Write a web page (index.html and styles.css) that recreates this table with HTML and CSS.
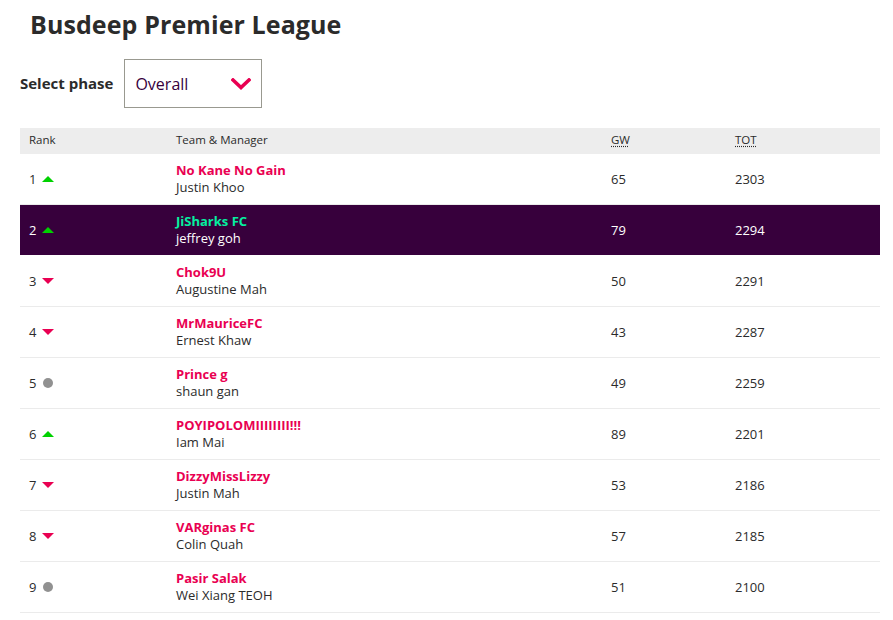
FILE: index.html
```html
<!DOCTYPE html>
<html>
<head>
<meta charset="utf-8">
<link rel="stylesheet" href="styles.css">
</head>
<body>
<h1 class="title">Busdeep Premier League</h1>
<div class="phase">
  <span class="phase-label">Select phase</span>
  <div class="select">
    <span>Overall</span>
    <svg class="chev" width="20" height="12" viewBox="0 0 20 12"><path d="M2 2 L10 9.5 L18 2" fill="none" stroke="#e90052" stroke-width="3.6" stroke-linecap="square"/></svg>
  </div>
</div>
<div class="table">
  <div class="row head">
    <div>Rank</div><div>Team &amp; Manager</div><div><abbr>GW</abbr></div><div><abbr>TOT</abbr></div>
  </div>
  <div class="row"><div class="rank">1 <i class="up"></i></div><div class="team"><b>No Kane No Gain</b><span>Justin Khoo</span></div><div>65</div><div>2303</div></div>
  <div class="row me"><div class="rank">2 <i class="up"></i></div><div class="team"><b>JiSharks FC</b><span>jeffrey goh</span></div><div>79</div><div>2294</div></div>
  <div class="row"><div class="rank">3 <i class="down"></i></div><div class="team"><b>Chok9U</b><span>Augustine Mah</span></div><div>50</div><div>2291</div></div>
  <div class="row"><div class="rank">4 <i class="down"></i></div><div class="team"><b>MrMauriceFC</b><span>Ernest Khaw</span></div><div>43</div><div>2287</div></div>
  <div class="row"><div class="rank">5 <i class="same"></i></div><div class="team"><b>Prince g</b><span>shaun gan</span></div><div>49</div><div>2259</div></div>
  <div class="row"><div class="rank">6 <i class="up"></i></div><div class="team"><b>POYIPOLOMIIIIIIII!!!</b><span>Iam Mai</span></div><div>89</div><div>2201</div></div>
  <div class="row"><div class="rank">7 <i class="down"></i></div><div class="team"><b>DizzyMissLizzy</b><span>Justin Mah</span></div><div>53</div><div>2186</div></div>
  <div class="row"><div class="rank">8 <i class="down"></i></div><div class="team"><b>VARginas FC</b><span>Colin Quah</span></div><div>57</div><div>2185</div></div>
  <div class="row"><div class="rank">9 <i class="same"></i></div><div class="team"><b>Pasir Salak</b><span>Wei Xiang TEOH</span></div><div>51</div><div>2100</div></div>
</div>
</body>
</html>
```
FILE: styles.css
```css
html, body { margin: 0; padding: 0; background: #fff; }
body {
  font-family: "Open Sans", "Liberation Sans", sans-serif;
  color: #37003c;
  padding: 0 13px 0 20px;
}
.title {
  margin: 0;
  padding: 8px 0 0 10px;
  font-size: 25px;
  line-height: 32px;
  font-weight: 700;
  color: #2b2b2b;
  letter-spacing: 0.1px;
}
.phase {
  display: flex;
  align-items: center;
  gap: 11px;
  margin-top: 19px;
}
.phase-label {
  font-weight: 700;
  font-size: 15px;
  color: #2b2b2b;
  margin-top: -2px;
}
.select {
  box-sizing: border-box;
  width: 138px;
  height: 49px;
  border: 1px solid #999990;
  display: flex;
  align-items: center;
  justify-content: space-between;
  padding: 0 10px 0 10px;
  font-size: 16px;
  color: #37003c;
}
.chev { display: block; margin-top: 1px; }
.table { margin-top: 20px; }
.row {
  display: grid;
  grid-template-columns: 156px 435px 124px 1fr;
  align-items: center;
  height: 51px;
  box-sizing: border-box;
  border-bottom: 1px solid #ebebeb;
  font-size: 13px;
  color: #2b2b2b;
}
.row > div { padding-bottom: 1px; }
.row > div:first-child { padding-left: 9px; }
.row.head {
  height: 26px;
  background: #ededed;
  border-bottom: none;
  font-size: 11.5px;
  color: #2b2b2b;
}
.row.head > div { padding-bottom: 3px; }
abbr { text-decoration: underline dotted; text-underline-offset: 2px; }
.row.me { background: #37003c; color: #fff; border-bottom: 1px solid #fff; }
.team { display: flex; flex-direction: column; line-height: 17px; }
.team b { color: #e90052; font-weight: 700; }
.team span { color: #2b2b2b; }
.me .team b { color: #05f0a0; }
.me .team span { color: #fff; }
.rank { display: flex; align-items: center; gap: 6px; }
.rank i { display: block; }
.up { width: 0; height: 0; border-left: 6px solid transparent; border-right: 6px solid transparent; border-bottom: 6px solid #00d100; }
.down { width: 0; height: 0; border-left: 6px solid transparent; border-right: 6px solid transparent; border-top: 6px solid #e90052; }
.same { width: 10px; height: 10px; border-radius: 50%; background: #919191; margin-left: 1px; }
```
